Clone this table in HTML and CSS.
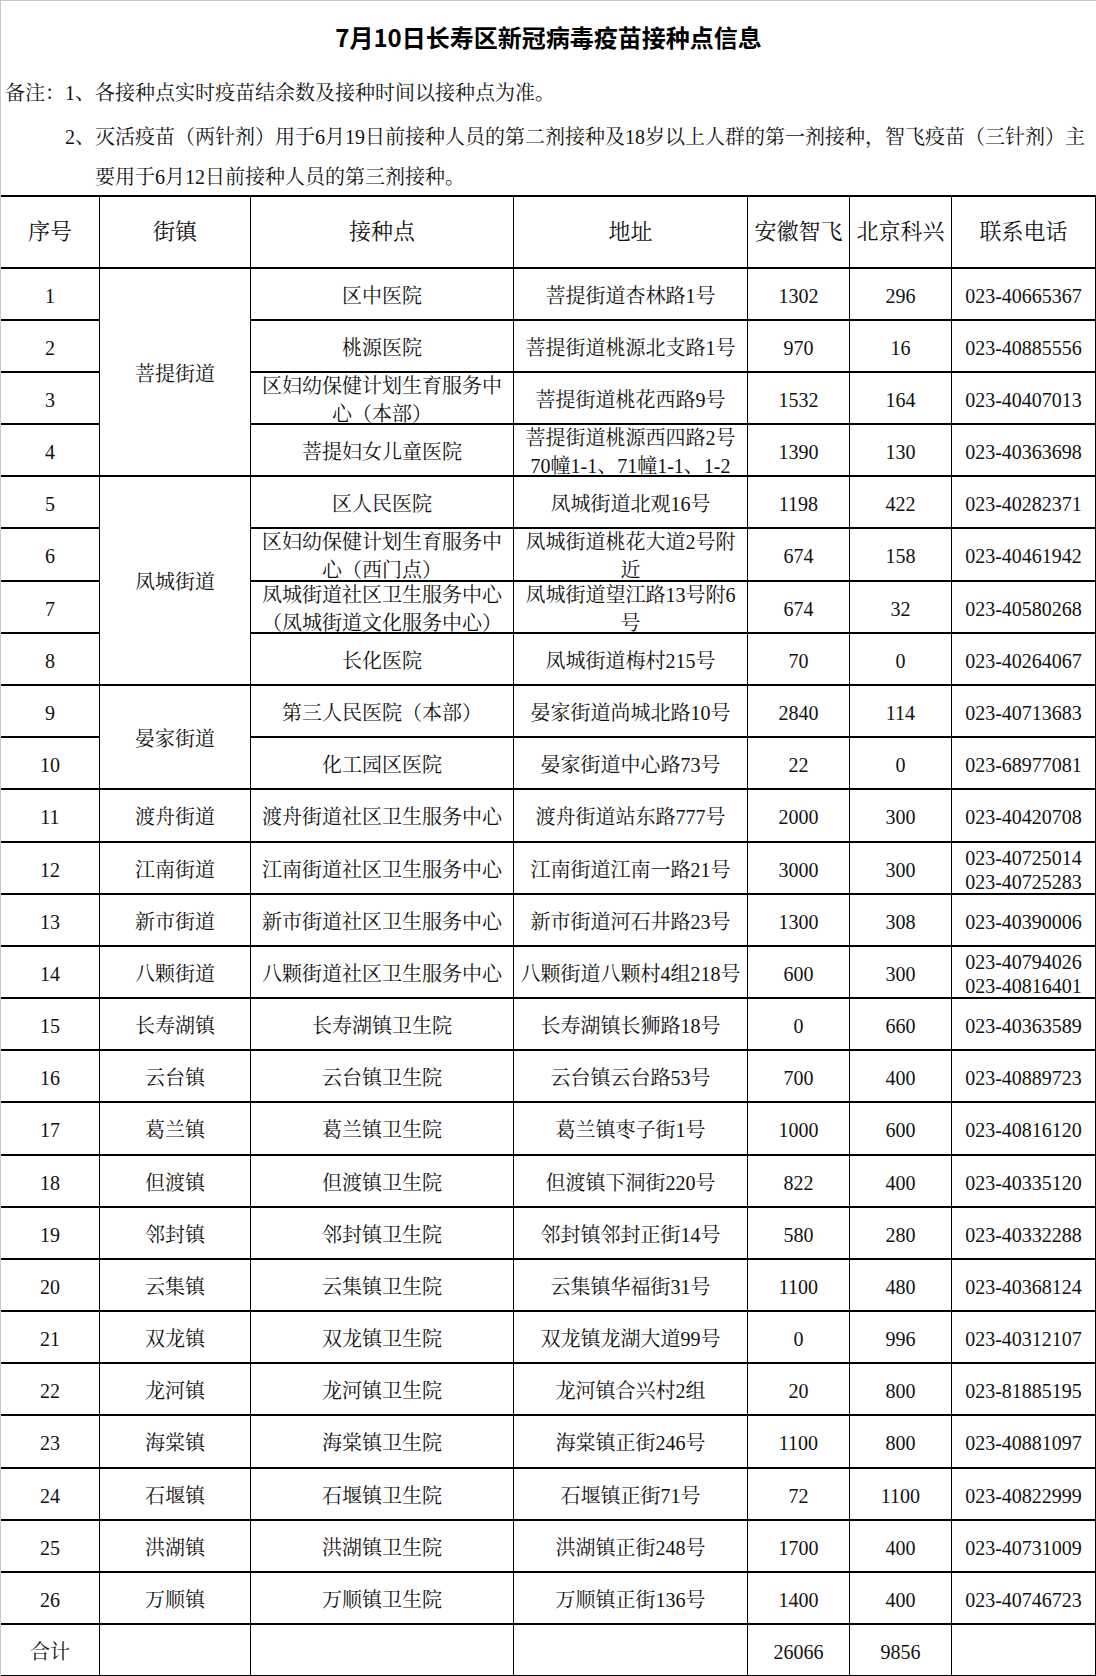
FILE: index.html
```html
<!DOCTYPE html>
<html lang="zh-CN">
<head>
<meta charset="utf-8">
<title>7月10日长寿区新冠病毒疫苗接种点信息</title>
<link rel="stylesheet" href="styles.css">
</head>
<body>
<div class="sheet">
  <div class="title">7月10日长寿区新冠病毒疫苗接种点信息</div>
  <div class="notes">
    <div class="note-label">备注：</div>
    <div class="note-items">
      <div class="note n1"><span class="num">1、</span><span class="txt">各接种点实时疫苗结余数及接种时间以接种点为准。</span></div>
      <div class="note n2"><span class="num">2、</span><span class="txt">灭活疫苗（两针剂）用于6月19日前接种人员的第二剂接种及18岁以上人群的第一剂接种，智飞疫苗（三针剂）主<br>要用于6月12日前接种人员的第三剂接种。</span></div>
    </div>
  </div>
  <div class="grid">
    <div class="h">序号</div><div class="h">街镇</div><div class="h">接种点</div><div class="h">地址</div><div class="h">安徽智飞</div><div class="h">北京科兴</div><div class="h">联系电话</div>

    <div>1</div><div class="span4">菩提街道</div><div>区中医院</div><div>菩提街道杏林路1号</div><div>1302</div><div>296</div><div>023-40665367</div>
    <div>2</div><div>桃源医院</div><div>菩提街道桃源北支路1号</div><div>970</div><div>16</div><div>023-40885556</div>
    <div>3</div><div>区妇幼保健计划生育服务中<br>心（本部）</div><div>菩提街道桃花西路9号</div><div>1532</div><div>164</div><div>023-40407013</div>
    <div>4</div><div>菩提妇女儿童医院</div><div>菩提街道桃源西四路2号<br>70幢1-1、71幢1-1、1-2</div><div>1390</div><div>130</div><div>023-40363698</div>

    <div>5</div><div class="span4">凤城街道</div><div>区人民医院</div><div>凤城街道北观16号</div><div>1198</div><div>422</div><div>023-40282371</div>
    <div>6</div><div>区妇幼保健计划生育服务中<br>心（西门点）</div><div>凤城街道桃花大道2号附<br>近</div><div>674</div><div>158</div><div>023-40461942</div>
    <div>7</div><div>凤城街道社区卫生服务中心<br>（凤城街道文化服务中心）</div><div>凤城街道望江路13号附6<br>号</div><div>674</div><div>32</div><div>023-40580268</div>
    <div>8</div><div>长化医院</div><div>凤城街道梅村215号</div><div>70</div><div>0</div><div>023-40264067</div>

    <div>9</div><div class="span2">晏家街道</div><div>第三人民医院（本部）</div><div>晏家街道尚城北路10号</div><div>2840</div><div>114</div><div>023-40713683</div>
    <div>10</div><div>化工园区医院</div><div>晏家街道中心路73号</div><div>22</div><div>0</div><div>023-68977081</div>

    <div>11</div><div>渡舟街道</div><div>渡舟街道社区卫生服务中心</div><div>渡舟街道站东路777号</div><div>2000</div><div>300</div><div>023-40420708</div>
    <div>12</div><div>江南街道</div><div>江南街道社区卫生服务中心</div><div>江南街道江南一路21号</div><div>3000</div><div>300</div><div class="tight">023-40725014<br>023-40725283</div>
    <div>13</div><div>新市街道</div><div>新市街道社区卫生服务中心</div><div>新市街道河石井路23号</div><div>1300</div><div>308</div><div>023-40390006</div>
    <div>14</div><div>八颗街道</div><div>八颗街道社区卫生服务中心</div><div>八颗街道八颗村4组218号</div><div>600</div><div>300</div><div class="tight">023-40794026<br>023-40816401</div>
    <div>15</div><div>长寿湖镇</div><div>长寿湖镇卫生院</div><div>长寿湖镇长狮路18号</div><div>0</div><div>660</div><div>023-40363589</div>
    <div>16</div><div>云台镇</div><div>云台镇卫生院</div><div>云台镇云台路53号</div><div>700</div><div>400</div><div>023-40889723</div>
    <div>17</div><div>葛兰镇</div><div>葛兰镇卫生院</div><div>葛兰镇枣子街1号</div><div>1000</div><div>600</div><div>023-40816120</div>
    <div>18</div><div>但渡镇</div><div>但渡镇卫生院</div><div>但渡镇下洞街220号</div><div>822</div><div>400</div><div>023-40335120</div>
    <div>19</div><div>邻封镇</div><div>邻封镇卫生院</div><div>邻封镇邻封正街14号</div><div>580</div><div>280</div><div>023-40332288</div>
    <div>20</div><div>云集镇</div><div>云集镇卫生院</div><div>云集镇华福街31号</div><div>1100</div><div>480</div><div>023-40368124</div>
    <div>21</div><div>双龙镇</div><div>双龙镇卫生院</div><div>双龙镇龙湖大道99号</div><div>0</div><div>996</div><div>023-40312107</div>
    <div>22</div><div>龙河镇</div><div>龙河镇卫生院</div><div>龙河镇合兴村2组</div><div>20</div><div>800</div><div>023-81885195</div>
    <div>23</div><div>海棠镇</div><div>海棠镇卫生院</div><div>海棠镇正街246号</div><div>1100</div><div>800</div><div>023-40881097</div>
    <div>24</div><div>石堰镇</div><div>石堰镇卫生院</div><div>石堰镇正街71号</div><div>72</div><div>1100</div><div>023-40822999</div>
    <div>25</div><div>洪湖镇</div><div>洪湖镇卫生院</div><div>洪湖镇正街248号</div><div>1700</div><div>400</div><div>023-40731009</div>
    <div>26</div><div>万顺镇</div><div>万顺镇卫生院</div><div>万顺镇正街136号</div><div>1400</div><div>400</div><div>023-40746723</div>

    <div>合计</div><div></div><div></div><div></div><div>26066</div><div>9856</div><div></div>
  </div>
</div>
</body>
</html>
```

FILE: styles.css
```css
html, body {
  margin: 0;
  padding: 0;
  background: #ffffff;
}

body {
  font-family: "Liberation Serif", "Noto Serif CJK SC", "Noto Sans CJK SC", serif;
  color: #111111;
}

.sheet {
  width: 1096px;
  box-sizing: border-box;
  border-top: 1px solid #c8c8c8;
  border-left: 1px solid #c8c8c8;
}

.title {
  height: 71px;
  display: flex;
  align-items: center;
  justify-content: center;
  font-family: "Noto Sans CJK SC", sans-serif;
  font-weight: 700;
  font-size: 24px;
  color: #000000;
}

.notes {
  display: flex;
  padding-left: 4px;
  font-size: 20px;
  white-space: nowrap;
}

.note-label {
  width: 60px;
  flex: none;
  height: 42px;
  line-height: 42px;
}

.note-items {
  flex: 1;
}

.note {
  display: flex;
}

.num {
  width: 30px;
  flex: none;
}

.n1 {
  height: 42px;
  line-height: 42px;
}

.n2 {
  height: 81px;
  box-sizing: border-box;
  padding-top: 3px;
  line-height: 40px;
}

.grid {
  display: grid;
  grid-template-columns: 99px 151px 263px 234px 102px 102px 144px;
  grid-template-rows: 72px repeat(5, 52px) 53px repeat(4, 52px) 53px repeat(5, 52px) 53px repeat(5, 52px) 53px repeat(4, 52px);
  border-top: 2px solid #000000;
}

.grid > div {
  box-sizing: border-box;
  border-right: 1px solid #000000;
  border-bottom: 2px solid #000000;
  padding-top: 3px;
  display: flex;
  align-items: center;
  justify-content: center;
  text-align: center;
  white-space: nowrap;
  font-size: 20px;
  line-height: 28px;
}

.grid > .h {
  padding-top: 0;
  font-size: 22px;
}

.grid > .tight {
  line-height: 24px;
}

.grid > .span4 {
  grid-row: span 4;
}

.grid > .span2 {
  grid-row: span 2;
}
```
